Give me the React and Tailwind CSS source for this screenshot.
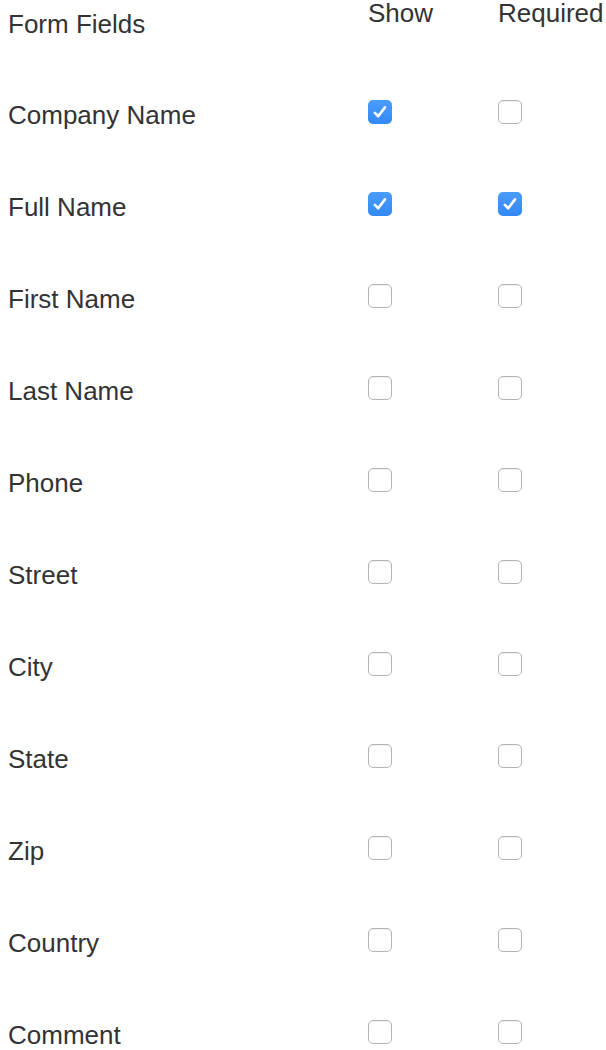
import React from 'react';

const fields = [
  { name: 'Company Name', show: true, required: false },
  { name: 'Full Name', show: true, required: true },
  { name: 'First Name' },
  { name: 'Last Name' },
  { name: 'Phone' },
  { name: 'Street' },
  { name: 'City' },
  { name: 'State' },
  { name: 'Zip' },
  { name: 'Country' },
  { name: 'Comment' },
];

function Box({ checked }) {
  if (checked) {
    return (
      <div className="w-6 h-6 rounded-[5px] bg-gradient-to-b from-[#4a9cfb] to-[#3388f5] flex items-center justify-center">
        <svg width="18" height="18" viewBox="0 0 16 16" fill="none">
          <path d="M3.4 8.8 L6.4 11.8 L12.4 3.9" stroke="white" strokeWidth="2.3" strokeLinecap="round" strokeLinejoin="round" />
        </svg>
      </div>
    );
  }
  return (
    <div className="w-6 h-6 rounded-[5px] bg-white border border-[#b4b4b4] shadow-[inset_0_1px_1px_rgba(0,0,0,0.06)]" />
  );
}

export default function App() {
  return (
    <div className="bg-white min-h-screen text-[#333] text-[26px]" style={{ fontFamily: '"Liberation Sans", Arial, sans-serif' }}>
      {/* Header */}
      <div className="flex h-[66px] items-start">
        <div className="w-[368px] pl-2 pt-2 leading-8">Form Fields</div>
        <div className="w-[130px] -mt-[3px] leading-8">Show</div>
        <div className="-mt-[3px] leading-8">Required</div>
      </div>

      {fields.map((f) => (
        <div key={f.name} className="flex h-[92px] items-center">
          <div className="w-[368px] pl-2 leading-8 mt-[6px]">{f.name}</div>
          <div className="w-[130px]">
            <Box checked={f.show} />
          </div>
          <div>
            <Box checked={f.required} />
          </div>
        </div>
      ))}
    </div>
  );
}
